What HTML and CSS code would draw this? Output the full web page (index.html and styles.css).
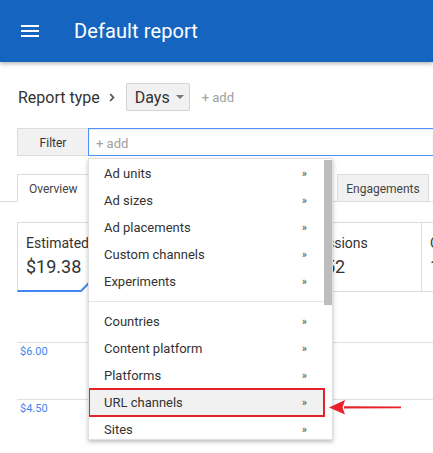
FILE: index.html
```html
<!DOCTYPE html>
<html>
<head>
<meta charset="utf-8">
<link rel="stylesheet" href="styles.css">
</head>
<body>
<header class="header">
  <svg class="burger" width="18" height="12" viewBox="0 0 18 12"><rect x="0" y="0" width="18" height="2" fill="#fff"/><rect x="0" y="5" width="18" height="2" fill="#fff"/><rect x="0" y="10" width="18" height="2" fill="#fff"/></svg>
  <h1 class="title">Default report</h1>
</header>

<div class="toolbar">
  <span class="report-label">Report type</span>
  <svg class="chev" width="6" height="9" viewBox="0 0 6 9"><path d="M1.2 1 L4.4 4.5 L1.2 8" fill="none" stroke="#555" stroke-width="1.8"/></svg>
  <button class="days-btn">Days<svg class="caret" width="8" height="4" viewBox="0 0 8 4"><path d="M0 0 H8 L4 4 Z" fill="#777"/></svg></button>
  <span class="add-link">+ add</span>
</div>

<div class="filter-row">
  <div class="filter-btn">Filter</div>
  <div class="filter-input">+ add</div>
</div>

<div class="tabs">
  <div class="tab active tab-overview">Overview</div>
  <div class="tab tab-mid"></div>
  <div class="tab tab-eng">Engagements</div>
</div>

<div class="cards">
  <div class="card card-1 selected">
    <div class="card-label">Estimated</div>
    <div class="card-value">$19.38</div>
  </div>
  <div class="card card-2"></div>
  <div class="card card-3">
    <div class="card-label">Impressions</div>
    <div class="card-value">10,452</div>
  </div>
  <div class="card card-4">
    <div class="card-label">Clicks</div>
    <div class="card-value">17</div>
  </div>
</div>

<div class="chart">
  <div class="grid-row">$6.00</div>
  <div class="grid-row">$4.50</div>
</div>

<div class="menu">
  <div class="menu-list">
    <div class="menu-item"><span>Ad units</span><span class="raquo">»</span></div>
    <div class="menu-item"><span>Ad sizes</span><span class="raquo">»</span></div>
    <div class="menu-item"><span>Ad placements</span><span class="raquo">»</span></div>
    <div class="menu-item"><span>Custom channels</span><span class="raquo">»</span></div>
    <div class="menu-item"><span>Experiments</span><span class="raquo">»</span></div>
    <div class="menu-sep"></div>
    <div class="menu-item"><span>Countries</span><span class="raquo">»</span></div>
    <div class="menu-item"><span>Content platform</span><span class="raquo">»</span></div>
    <div class="menu-item"><span>Platforms</span><span class="raquo">»</span></div>
    <div class="menu-item marked"><span>URL channels</span><span class="raquo">»</span></div>
    <div class="menu-item"><span>Sites</span><span class="raquo">»</span></div>
  </div>
  <div class="scrollbar"><div class="thumb"></div></div>
</div>

<svg class="arrow" width="76" height="18" viewBox="0 0 76 18">
  <path d="M16 8.2 L73 8.6 L73 10.2 L16 10.6 Z" fill="#e8222b"/>
  <path d="M1 9.4 L17 2 L14.5 9.4 L17 16.5 Z" fill="#e8222b"/>
</svg>
</body>
</html>
```

FILE: styles.css
```css
* { box-sizing: border-box; }
html, body { margin: 0; padding: 0; }
body {
  width: 433px;
  height: 453px;
  overflow: hidden;
  position: relative;
  font-family: Roboto, "Liberation Sans", Arial, sans-serif;
  color: #333;
  background: #fff;
}

.header {
  height: 62px;
  background: #1565c0;
  display: flex;
  align-items: center;
  box-shadow: 0 2px 4px rgba(0,0,0,0.28);
  position: relative;
  z-index: 1;
}
.burger { margin-left: 21px; display: block; }
.title {
  margin: 0 0 0 35px;
  font-size: 20px;
  font-weight: 400;
  color: #fff;
  letter-spacing: 0.1px;
}

.toolbar {
  display: flex;
  align-items: center;
  height: 28px;
  margin-top: 21px;
  padding-left: 18px;
}
.report-label { font-size: 16px; color: #333; }
.chev { margin-left: 9px; display: block; }
.days-btn {
  margin-left: 11px;
  height: 28px;
  padding: 0 5px 0 8px;
  border: 1px solid #d3d3d3;
  border-radius: 2px;
  background: #f1f1f1;
  font-family: inherit;
  font-size: 16px;
  color: #333;
  display: flex;
  align-items: center;
}
.caret { margin-left: 6px; display: block; }
.add-link { margin-left: 12px; font-size: 13px; color: #a0a0a0; }

.filter-row {
  display: flex;
  height: 28px;
  margin-top: 17px;
  margin-left: 17px;
}
.filter-btn {
  width: 71px;
  border: 1px solid #dcdcdc;
  border-right: none;
  background: #f1f1f1;
  font-size: 12px;
  color: #333;
  display: flex;
  align-items: center;
  justify-content: center;
  padding-top: 2px;
}
.filter-input {
  flex: 1;
  border: 1px solid #4d90fe;
  border-right: none;
  box-shadow: inset 0 1px 2px rgba(0,0,0,0.1);
  font-size: 13px;
  color: #a0a0a0;
  padding-left: 7px;
  padding-top: 2px;
  display: flex;
  align-items: center;
}

.tabs {
  display: flex;
  align-items: flex-end;
  gap: 4px;
  height: 28px;
  margin-top: 18px;
  padding-left: 17px;
  border-bottom: 1px solid #dcdcdc;
}
.tab {
  height: 28px;
  border: 1px solid #dcdcdc;
  background: #f1f1f1;
  font-size: 12px;
  color: #444;
  display: flex;
  align-items: center;
  justify-content: center;
  margin-bottom: -1px;
  padding-top: 1px;
}
.tab.active { background: #fff; border-bottom-color: #fff; }
.tab-overview { width: 80px; justify-content: flex-start; padding-left: 11px; }
.tab-mid { width: 232px; }
.tab-eng { width: 92px; }

.cards {
  display: flex;
  margin-top: 20px;
  margin-left: 17px;
}
.card {
  height: 70px;
  border: 1px solid #dcdcdc;
  border-left: none;
  padding: 12px 8px 0 8px;
  position: relative;
  flex: none;
}
.card-1 { width: 133px; border-left: 1px solid #dcdcdc; }
.card-2 { width: 133px; }
.card-3 { width: 139px; }
.card-4 { width: 60px; border-right: none; }
.card.selected { border-bottom: 2px solid #4285f4; }
.card.selected::after {
  content: "";
  position: absolute;
  left: 65px;
  bottom: -6px;
  width: 10px;
  height: 10px;
  background: #fff;
  border-top: 2px solid #4285f4;
  border-left: 2px solid #4285f4;
  transform: rotate(45deg);
}
.card-label {
  font-size: 14px;
  line-height: 16px;
  color: #333;
  white-space: nowrap;
}
.card-value {
  margin-top: 5px;
  font-size: 18px;
  line-height: 22px;
  color: #333;
  white-space: nowrap;
}

.chart {
  margin-top: 50px;
  margin-left: 17px;
}
.grid-row {
  height: 57px;
  border-top: 1px solid #e0e0e0;
  font-size: 11px;
  line-height: 13px;
  color: #4285f4;
  padding: 2px 0 0 3px;
}

.menu {
  position: absolute;
  left: 88px;
  top: 158px;
  width: 245px;
  height: 282px;
  background: #fff;
  border: 1px solid rgba(0,0,0,0.12);
  box-shadow: 0 2px 4px rgba(0,0,0,0.25);
  display: flex;
  overflow: hidden;
  z-index: 2;
}
.menu-list {
  flex: 1;
  padding-top: 1px;
}
.menu-item {
  height: 27px;
  display: flex;
  align-items: center;
  justify-content: space-between;
  padding: 0 17px 0 15px;
  font-size: 13px;
  color: #333;
}
.menu-item.marked {
  background: #f1f1f1;
  outline: 2px solid #e3232c;
  outline-offset: -1px;
}
.raquo {
  font-size: 11px;
  color: #555;
}
.menu-sep {
  height: 1px;
  margin: 6px 0;
  background: #e5e5e5;
}
.scrollbar {
  width: 8px;
  padding-top: 1px;
}
.thumb {
  height: 145px;
  background: #bdbdbd;
}

.arrow {
  position: absolute;
  left: 328px;
  top: 398px;
  z-index: 3;
}
```
